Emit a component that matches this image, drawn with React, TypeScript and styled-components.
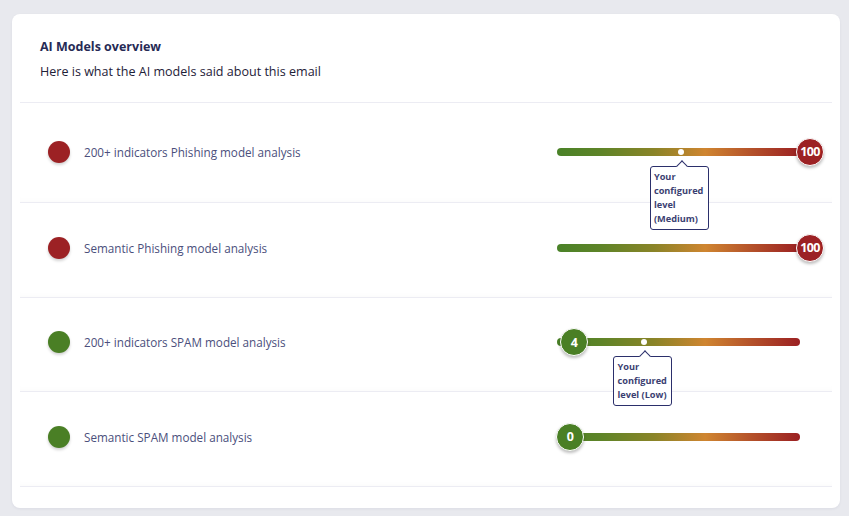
import styled, { createGlobalStyle } from 'styled-components';

const GlobalStyle = createGlobalStyle`
  html, body {
    margin: 0;
    padding: 0;
    background: #e8e9ee;
    font-family: 'Open Sans', 'Noto Sans', Arial, sans-serif;
  }
`;

const Page = styled.div`
  padding: 14px 9px 8px 12px;
  box-sizing: border-box;
  width: 849px;
  height: 516px;
`;

const Card = styled.div`
  background: #ffffff;
  border-radius: 8px;
  height: 494px;
  box-sizing: border-box;
  padding: 0 8px;
  box-shadow: 0 1px 3px rgba(30, 35, 80, 0.06);
`;

const Header = styled.div`
  padding: 24px 20px 0 20px;
  height: 89px;
  box-sizing: border-box;
  border-bottom: 1px solid #ececf3;
`;

const Title = styled.div`
  font-weight: 700;
  font-size: 12.5px;
  color: #262a55;
  line-height: 18px;
`;

const Subtitle = styled.div`
  margin-top: 7px;
  font-size: 12.55px;
  color: #1e2138;
  line-height: 18px;
`;

const List = styled.div`
  display: flex;
  flex-direction: column;
  padding-top: 4px;
`;

const Row = styled.div`
  position: relative;
  height: 89.5px;
  display: flex;
  align-items: center;
  padding: 0 28px 4px 28px;
  border-bottom: 1px solid #ececf3;
  box-shadow: inset 0 -6px 10px -8px rgba(30, 35, 80, 0.04);

  &:first-child {
    height: 89px;
    padding-bottom: 6px;
  }
`;

const Dot = styled.div<{ $color: string }>`
  width: 22px;
  height: 22px;
  border-radius: 50%;
  background: ${(p) => p.$color};
  box-shadow: 0 2px 3px rgba(0, 0, 0, 0.18);
  flex-shrink: 0;
`;

const Label = styled.div`
  margin-left: 14px;
  font-size: 11.7px;
  color: #4b4f7c;
  flex: 1;
`;

const Track = styled.div`
  position: relative;
  width: 243px;
  height: 8px;
  border-radius: 4px;
  margin-right: 4px;
  background: linear-gradient(
    90deg,
    #4a8228 0%,
    #5e8428 18%,
    #8a8428 40%,
    #cf8530 61%,
    #b4512a 80%,
    #9b2022 100%
  );
`;

const Marker = styled.div`
  position: absolute;
  top: 1px;
  width: 6px;
  height: 6px;
  margin-left: -3px;
  border-radius: 50%;
  background: #ffffff;
`;

const Tip = styled.div`
  position: absolute;
  top: 18px;
  width: 59px;
  margin-left: -31px;
  box-sizing: border-box;
  padding: 3px 3px 3px 3px;
  background: #ffffff;
  border: 1px solid #2b2f6b;
  border-radius: 3px;
  font-size: 9.2px;
  font-weight: 700;
  line-height: 14px;
  color: #3b3f72;
  z-index: 2;

  &::before {
    content: '';
    position: absolute;
    top: -5px;
    left: 27px;
    width: 7px;
    height: 7px;
    background: #ffffff;
    border-left: 1px solid #2b2f6b;
    border-top: 1px solid #2b2f6b;
    transform: rotate(45deg);
  }
`;

const Badge = styled.div<{ $color: string }>`
  position: absolute;
  top: 50%;
  width: 26px;
  height: 26px;
  margin-top: -14px;
  margin-left: -1px;
  border-radius: 50%;
  border: 1px solid #ffffff;
  background: ${(p) => p.$color};
  box-shadow: 0 2px 3px rgba(0, 0, 0, 0.25);
  color: #ffffff;
  font-size: 12.5px;
  font-weight: 700;
  letter-spacing: -0.6px;
  display: flex;
  align-items: center;
  justify-content: center;
  z-index: 1;
`;

const RED = '#9c2124';
const GREEN = '#4a7f25';

type Model = {
  name: string;
  value: number;
  color: string;
  level?: number;
  levelText?: string;
};

const models: Model[] = [
  { name: '200+ indicators Phishing model analysis', value: 100, color: RED, level: 51, levelText: 'Your configured level (Medium)' },
  { name: 'Semantic Phishing model analysis', value: 100, color: RED },
  { name: '200+ indicators SPAM model analysis', value: 4, color: GREEN, level: 36, levelText: 'Your configured level (Low)' },
  { name: 'Semantic SPAM model analysis', value: 0, color: GREEN },
];

const ModelRow = ({ model }: { model: Model }) => {
  const { name, value, color, level, levelText } = model;
  const badgeLeft = value === 4 ? 4 : (value / 100) * 240;
  return (
    <Row>
      <Dot $color={color} />
      <Label>{name}</Label>
      <Track>
        {level !== undefined && (
          <>
            <Marker style={{ left: `${level}%` }} />
            <Tip style={{ left: `${level}%` }}>{levelText}</Tip>
          </>
        )}
        <Badge $color={color} style={{ left: `${badgeLeft}px` }}>
          {value}
        </Badge>
      </Track>
    </Row>
  );
};

const App = () => {
  return (
    <>
      <GlobalStyle />
      <Page>
        <Card>
          <Header>
            <Title>AI Models overview</Title>
            <Subtitle>Here is what the AI models said about this email</Subtitle>
          </Header>
          <List>
            {models.map((m) => (
              <ModelRow key={m.name} model={m} />
            ))}
          </List>
        </Card>
      </Page>
    </>
  );
};

export default App;
